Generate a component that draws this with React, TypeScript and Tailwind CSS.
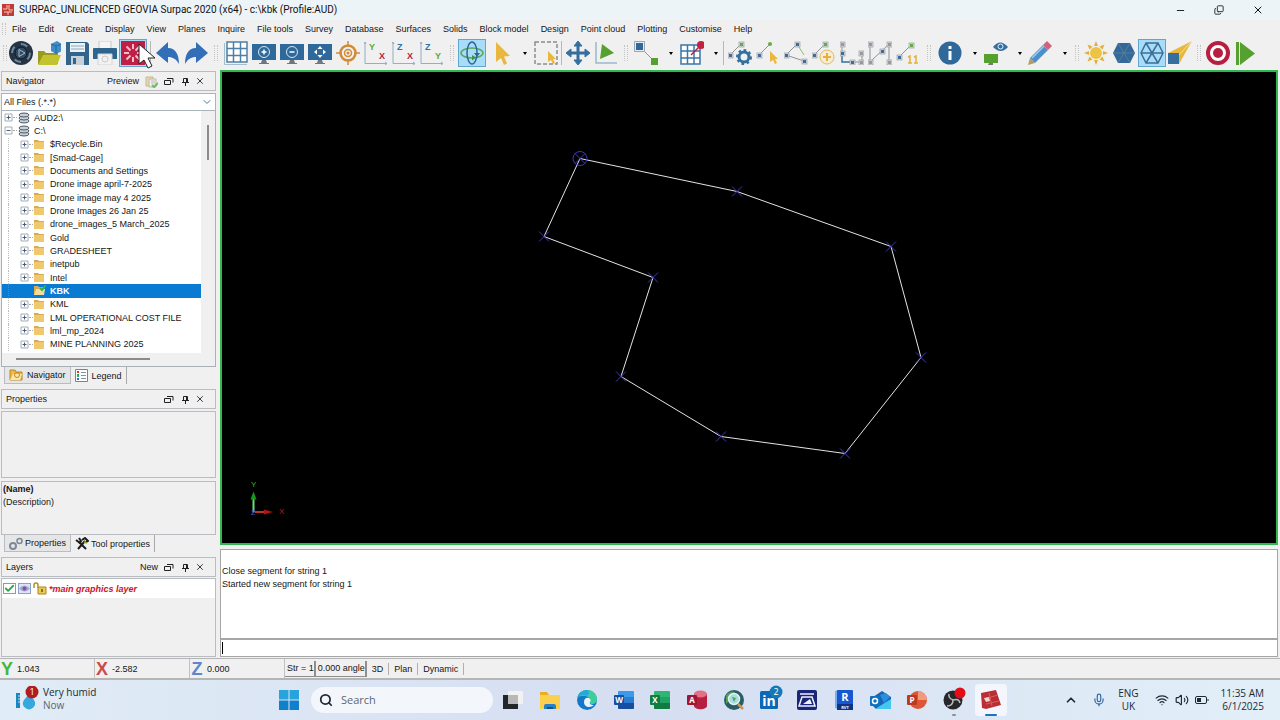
import React from 'react';
import { Check, ChevronDown, ChevronUp, Copy, Mic, Minus, Search, Volume2, Wifi, X } from 'lucide-react';

const menus = [
  'File', 'Edit', 'Create', 'Display', 'View', 'Planes', 'Inquire', 'File tools', 'Survey',
  'Database', 'Surfaces', 'Solids', 'Block model', 'Design', 'Point cloud', 'Plotting',
  'Customise', 'Help',
];

const folders = [
  '$Recycle.Bin', '[Smad-Cage]', 'Documents and Settings', 'Drone image april-7-2025',
  'Drone image may 4 2025', 'Drone Images 26 Jan 25', 'drone_images_5 March_2025', 'Gold',
  'GRADESHEET', 'inetpub', 'Intel', 'KBK', 'KML', 'LML OPERATIONAL COST FILE', 'lml_mp_2024',
  'MINE PLANNING 2025',
];

const points = [
  [580, 158], [737, 191], [891, 246], [921, 357], [845, 453],
  [721, 436], [621, 376], [653, 277], [544, 236],
];

/* ---------- toolbar parts ---------- */

interface ToolProps {
  label: string;
  active?: boolean;
  children: React.ReactNode;
}

const Tool: React.FC<ToolProps> = ({ label, active, children }) => (
  <button
    type="button"
    aria-label={label}
    className={`flex h-7 w-7 shrink-0 items-center justify-center ${
      active ? 'border border-[#5fa6d0] bg-[#a9dcf8]' : ''
    }`}
  >
    <svg viewBox="0 0 24 24" className="h-6 w-6 shrink-0" fill="none">
      {children}
    </svg>
  </button>
);

const Grip = ({ className = 'w-3' }: { className?: string }) => (
  <span className={`flex h-7 shrink-0 items-center justify-center ${className}`}>
    <span className="h-4 w-1 border-x border-dotted border-[#c4c4c4]" />
  </span>
);

const Drop = ({ className = 'w-[18px]' }: { className?: string }) => (
  <button type="button" aria-label="More options" className={`flex h-7 shrink-0 items-center justify-center pl-1 ${className}`}>
    <svg viewBox="0 0 4 3" className="h-[3px] w-1">
      <path d="M0 0h4L2 3z" fill="#000" />
    </svg>
  </button>
);

const Divider = () => <span className="mx-px mt-0.5 h-6 w-0.5 shrink-0 border-l border-[#b8b8b8]" />;

const Node = ({ x, y, color = '#3f6c98' }: { x: number; y: number; color?: string }) => (
  <g>
    <rect x={x - 2} y={y - 2} width="5" height="5" fill="#d5d9dc" stroke="#a3a8ac" strokeWidth=".8" />
    <rect x={x - 1} y={y - 1} width="3" height="3" fill={color} />
  </g>
);

const Monitor = ({ children }: { children?: React.ReactNode }) => (
  <>
    <path d="M0 3h24v16H0z" fill="#2f699c" />
    <path d="M10 19h4l1 3h2v1H7v-1h2z" fill="#6e7780" />
    {children}
  </>
);

const Axes = ({ a, b, ca, cb }: { a: string; b: string; ca: string; cb: string }) => (
  <>
    <path d="M1 1v21.500h22M21 21l2 1.500-2 1.500M0 3l1-2 1 2" stroke="#8eb0c9" />
    <text x="5" y="9" fontSize="9" fontWeight="700" fontFamily="Liberation Sans, sans-serif" fill={ca}>{a}</text>
    <text x="15" y="18" fontSize="9" fontWeight="700" fontFamily="Liberation Sans, sans-serif" fill={cb}>{b}</text>
  </>
);

const Toolbar = () => (
  <div className="flex h-8 shrink-0 items-start overflow-hidden pl-[3px] pt-px">
    <Grip className="w-1" />
    <Tool label="Surpac">
      <circle cx="12" cy="12" r="12" fill="#253444" />
      <circle cx="12" cy="12" r="9" stroke="#71889c" strokeWidth="2" strokeDasharray="7 7" />
      <circle cx="12" cy="12" r="6" fill="#314a61" stroke="#0f1b26" />
      <path d="M10 8.500v7l6-3.500z" stroke="#a7bccd" />
    </Tool>
    <Tool label="Open">
      <path d="M1 10h6l2 2h12v11H1z" fill="#9a9a1e" />
      <path d="M6 14h18l-4 10H1z" fill="#c2c42f" />
      <path d="M14 3l6-3 5 3v7l-6 3-5-3z" fill="#3f8cc8" />
      <path d="M14 3l5 2v8M19 5l6-2" stroke="#2368a0" />
    </Tool>
    <Tool label="Save">
      <path d="M1 1h21l3 3v20H1z" fill="#33648c" />
      <path d="M5 2h15v9H5z" fill="#edf2f5" />
      <path d="M6 5h13M6 8h13" stroke="#8fa9bb" />
      <path d="M6 15h13v9H6z" fill="#c5d0d8" />
      <path d="M8 17h3v6H8z" fill="#33648c" />
    </Tool>
    <Tool label="Print">
      <path d="M6 0h12v8H6z" fill="#f6f6f6" stroke="#c3c7ca" />
      <path d="M0 8q0-1 1-1h22q1 0 1 1v10H0z" fill="#2e658f" />
      <path d="M5 13h14v11H5z" fill="#f2f2f2" stroke="#d3d5d6" />
      <circle cx="12" cy="18" r="3" stroke="#c7c9cb" />
    </Tool>
    <Tool label="Reset graphics" active>
      <path d="M-1-1h26v26H-1z" fill="#c01f45" />
      <path d="M12 3v5M12 16v5M3 12h5M16 12h5M5.500 5.500l4 4M14.500 14.500l4 4M18.500 5.500l-4 4M9.500 14.500l-4 4" stroke="#f7bccb" strokeWidth="2" />
    </Tool>
    <span className="flex w-[7px] shrink-0 pl-0.5"><Divider /></span>
    <Tool label="Undo">
      <path d="M0 12L12 1v6c8 0 11 7 11 16-3-5-6-7-11-7v6z" fill="#336fb8" />
    </Tool>
    <Tool label="Redo">
      <path d="M24 12L12 1v6C4 7 1 14 1 23c3-5 6-7 11-7v6z" fill="#336fb8" />
    </Tool>
    <Grip />
    <Tool label="Grid">
      <path d="M3 1h20v20H3zM3 7.500h20M3 14.500h20M9.500 1v20M16.500 1v20" fill="#fff" stroke="#4d80a8" strokeWidth="1.500" />
      <path d="M.5 2v21.500H23" stroke="#a5bccd" />
    </Tool>
    <Tool label="Zoom in">
      <Monitor>
        <circle cx="12" cy="11" r="5.500" stroke="#d7e5f0" />
        <path d="M12 8.500v5M9.500 11h5" stroke="#fff" strokeWidth="1.500" />
      </Monitor>
    </Tool>
    <Tool label="Zoom out">
      <Monitor>
        <circle cx="12" cy="11" r="5.500" stroke="#d7e5f0" />
        <path d="M9.500 11h5" stroke="#fff" strokeWidth="1.500" />
      </Monitor>
    </Tool>
    <Tool label="Zoom all">
      <Monitor>
        <path d="M12 5l2.500 3h-5zM12 17l2.500-3h-5zM6 11l3-2.500v5zM18 11l-3-2.500v5z" fill="#fff" />
      </Monitor>
    </Tool>
    <Tool label="Centre">
      <circle cx="12" cy="12" r="7.500" stroke="#d48a34" strokeWidth="2.500" />
      <circle cx="12" cy="12" r="3.500" stroke="#d48a34" strokeWidth="1.500" />
      <path d="M12 0v6M12 18v6M0 12h6M18 12h6" stroke="#d48a34" strokeWidth="1.500" />
      <circle cx="12" cy="12" r="1.500" fill="#d48a34" />
    </Tool>
    <Tool label="XY view"><Axes a="Y" b="X" ca="#5aa83c" cb="#b3203f" /></Tool>
    <Tool label="XZ view"><Axes a="Z" b="X" ca="#346f9f" cb="#b3203f" /></Tool>
    <Tool label="YZ view"><Axes a="Z" b="Y" ca="#346f9f" cb="#5aa83c" /></Tool>
    <Grip />
    <Tool label="Orbit" active>
      <ellipse cx="12" cy="12" rx="11" ry="5" stroke="#57a857" strokeWidth="1.500" />
      <ellipse cx="12" cy="12" rx="5" ry="11" stroke="#2c6797" strokeWidth="1.500" />
      <path d="M12 14l4 2.500-4 3z" fill="#3f953f" />
      <path d="M14 12h6l-3 4z" fill="#2c6797" />
    </Tool>
    <Tool label="Select">
      <path d="M8 1v20l5-4 3 7 3-1.500-3-7 6-.5z" fill="#eab63c" />
    </Tool>
    <Drop />
    <Tool label="Box select">
      <path d="M1 1h22v22H1z" stroke="#8c8c8c" strokeWidth="1.500" strokeDasharray="4 2" />
      <path d="M14 10v11l3-2 2 4 2-1-2-4h3z" fill="#eab63c" />
    </Tool>
    <Divider />
    <Tool label="Pan">
      <path d="M12 0l4 5h-3v6h6V8l5 4-5 4v-3h-6v6h3l-4 5-4-5h3v-6H5v3l-5-4 5-4v3h6V5H8z" fill="#346f9f" stroke="#346f9f" />
    </Tool>
    <Tool label="Plane view">
      <path d="M2 1v21h21" stroke="#9cb6c8" strokeWidth="1.500" />
      <path d="M8 3l12 9-14 6z" fill="#55a02f" />
    </Tool>
    <Grip />
    <Tool label="Point to point">
      <path d="M6 6l14 14" stroke="#8d9397" />
      <path d="M.5.5h10v10H.5z" fill="#e8ecef" stroke="#9aa7b0" />
      <path d="M2 2h7v7H2z" fill="#2f699c" />
      <path d="M17 17h7v7h-7z" fill="#55a02f" />
    </Tool>
    <Drop />
    <Tool label="Digitise">
      <path d="M1 4h19v19H1zM1 10h19M1 17h19M7.500 4v19M14 4v19" fill="#fff" stroke="#3a76a6" strokeWidth="1.500" />
      <path d="M11 14l8-8" stroke="#b3203f" strokeWidth="1.500" />
      <circle cx="21" cy="4" r="4" fill="#c4203f" />
    </Tool>
    <Drop className="w-4" />
    <Divider />
    <Tool label="String settings">
      <path d="M2 14L13 3" stroke="#8d9397" />
      <Node x={2} y={14} /><Node x={13} y={3} color="#62ad45" />
      <circle cx="16" cy="16" r="5" stroke="#346f9f" strokeWidth="3" />
      <circle cx="16" cy="16" r="7" stroke="#346f9f" strokeWidth="2" strokeDasharray="2.700 2.700" />
    </Tool>
    <Tool label="Pick point">
      <path d="M3 14L14 3" stroke="#8d9397" />
      <Node x={3} y={14} />
      <circle cx="14" cy="3" r="2" fill="#62ad45" />
      <path d="M14 10v11l3-2 2 4 2-1-2-4h3z" fill="#eab63c" />
    </Tool>
    <Tool label="Close segment">
      <path d="M2 14L13 3M2 14l18 6" stroke="#8d9397" />
      <path d="M13 3l7 11" stroke="#8bc071" />
      <Node x={2} y={14} /><Node x={13} y={3} /><Node x={20} y={20} />
    </Tool>
    <Tool label="Insert point">
      <path d="M2 14L13 3" stroke="#8d9397" />
      <Node x={2} y={14} /><Node x={13} y={3} color="#62ad45" />
      <circle cx="15" cy="16" r="7" fill="#f5ecd5" stroke="#e3ba58" />
      <path d="M15 12v8M11 16h8" stroke="#e3b13c" strokeWidth="2" />
    </Tool>
    <Tool label="Break segment">
      <path d="M2 3v9M12 21h10v-9" stroke="#8d9397" />
      <path d="M2 12v9h9" stroke="#346f9f" strokeWidth="1.500" />
      <Node x={2} y={3} color="#999" /><Node x={2} y={12} /><Node x={12} y={21} /><Node x={21} y={21} color="#999" /><Node x={21} y={12} color="#999" />
    </Tool>
    <Tool label="Join segments">
      <path d="M2 3v18L21 3v18" stroke="#8d9397" />
      <Node x={2} y={3} color="#999" /><Node x={2} y={21} color="#999" /><Node x={14} y={10} /><Node x={21} y={3} color="#999" /><Node x={21} y={21} color="#999" />
    </Tool>
    <Tool label="Renumber">
      <path d="M3 16L15 4" stroke="#8d9397" />
      <Node x={3} y={16} /><Node x={15} y={4} color="#62ad45" />
      <path d="M12 16l2-1v7M18 16l2-1v7M12 22h4M18 22h4" stroke="#e3b13c" strokeWidth="1.500" />
    </Tool>
    <Grip className="w-3.5" />
    <Tool label="Information">
      <circle cx="12" cy="12" r="11.500" fill="#2f699c" />
      <path d="M12 5v3M12 10v9" stroke="#fff" strokeWidth="3" />
    </Tool>
    <Drop />
    <Tool label="Show display">
      <path d="M0 13h14v9H0z" fill="#55a02f" />
      <path d="M5 22h4v2H4z" fill="#777" />
      <path d="M9 6q7-9 15 0-7 8-15 0z" fill="#346f9f" />
      <circle cx="16.500" cy="5.500" r="2.500" stroke="#e7f0f7" />
    </Tool>
    <Drop className="w-4" />
    <Tool label="Edit style">
      <path d="M0 24l2-7 5 5z" fill="#bb9b5d" />
      <path d="M2 17L15 4l5 5L7 22z" fill="#4c8fc9" />
      <path d="M4 17L16 5" stroke="#a5cdec" strokeWidth="1.500" />
      <path d="M15 4l4-4 5 5-4 4z" fill="#d1627a" />
    </Tool>
    <Drop />
    <Grip className="w-2.5" />
    <Tool label="Light">
      <path d="M12 0l2 5h-4zM12 24l2-5h-4zM0 12l5-2v4zM24 12l-5-2v4zM3.500 3.500l5 2-3 3zM20.500 3.500l-2 5-3-3zM3.500 20.500l2-5 3 3zM20.500 20.500l-5-2 3-3z" fill="#e3ae39" />
      <circle cx="12" cy="12" r="6" fill="#edc346" />
    </Tool>
    <Tool label="Solid faces">
      <path d="M6 2h12l5 10-5 10H6L1 12z" fill="#33699a" />
      <path d="M6 2l12 20M18 2L6 22M1 12h22" stroke="#5a7e93" />
    </Tool>
    <Tool label="Wireframe" active>
      <path d="M6 2h12l5 10-5 10H6L1 12zM6 2l12 20M18 2L6 22M1 12h22" stroke="#3a6f97" strokeWidth="1.500" />
    </Tool>
    <Tool label="Projection">
      <path d="M24 0L0 12h11v11z" fill="#e8b83c" />
      <path d="M24 0L11 14" stroke="#f5e0a2" />
      <path d="M0 12h11v11H0z" fill="#346f9f" />
    </Tool>
    <Grip className="w-2.5" />
    <Tool label="Record">
      <circle cx="12" cy="12" r="10" fill="#fff" stroke="#b81e3f" strokeWidth="4" />
      <circle cx="12" cy="12" r="5" fill="#b81e3f" />
    </Tool>
    <Tool label="Run">
      <path d="M2 1h3v23H2zM6 1l15 11.500L6 24z" fill="#55a02f" />
    </Tool>
  </div>
);

/* ---------- left docked panels ---------- */

const PanelHeader = ({ title, action, copy }: { title: string; action?: string; copy?: boolean }) => (
  <div className="flex h-5 shrink-0 items-center border border-[#b9bcc0] bg-[#f0f0f0] pl-1 pr-2.5">
    <h2>{title}</h2>
    <div className="ml-auto flex items-center gap-1.5">
      {action && <button type="button">{action}</button>}
      {copy && (
        <button type="button" aria-label="Copy path">
          <svg viewBox="0 0 13 13" className="h-[13px] w-[13px]" fill="none">
            <path d="M1 2h7v9H1z" fill="#e4d7b4" stroke="#c9b98d" />
            <path d="M4 4h7v8H4z" fill="#f1efe8" stroke="#b9b9a8" />
            <path d="M6 6h4M6 8h4" stroke="#bbb" />
            <path d="M7 10l2 2 4-4" stroke="#6abf5e" strokeWidth="2" />
          </svg>
        </button>
      )}
      <button type="button" aria-label={`Float ${title}`} className="mr-0.5">
        <svg viewBox="0 0 10 9" className="h-[9px] w-2.5" fill="none" stroke="#222">
          <path d="M.5 3.500h6v4h-6zM3 1.500h6v4" />
        </svg>
      </button>
      <button type="button" aria-label={`Pin ${title}`}>
        <svg viewBox="0 0 7 9" className="h-[9px] w-[7px]" fill="none" stroke="#222">
          <path d="M1.500 5V1.500h4V5M0 5.500h7M3.500 6v3M4.500 2v3" />
        </svg>
      </button>
      <button type="button" aria-label={`Close ${title}`}>
        <X size={10} strokeWidth={2} />
      </button>
    </div>
  </div>
);

const Expander = ({ open }: { open?: boolean }) => (
  <svg viewBox="0 0 9 9" className="h-[9px] w-[9px] shrink-0" fill="none">
    <path d="M1 1h7v7H1z" fill="#fff" stroke="#a3adb9" />
    <path d={open ? 'M2.500 4.500h4' : 'M2.500 4.500h4M4.500 2.500v4'} stroke="#4a5e77" />
  </svg>
);

const DiskIcon = () => (
  <svg viewBox="0 0 12 12" className="h-3 w-3 shrink-0" fill="#c8d0d7" stroke="#4c5862">
    <ellipse cx="6" cy="9" rx="5" ry="2" />
    <ellipse cx="6" cy="6" rx="5" ry="2" />
    <ellipse cx="6" cy="3" rx="5" ry="2" />
  </svg>
);

const FolderIcon = ({ open }: { open?: boolean }) => (
  <svg viewBox="0 0 13 11" className="h-[11px] w-[13px] shrink-0" fill="none">
    <path d="M1 1h4l1 1h5v8H1z" fill="#d9ab4f" />
    {open ? <path d="M3 4h9l-1 6H1z" fill="#f3dc9c" /> : <path d="M1 3h10v7H1z" fill="#f0c96e" />}
    {open && <path d="M7 3l2 2 4-5" stroke="#35b044" strokeWidth="2" />}
  </svg>
);

const tabBase = 'flex h-[17px] items-center gap-0.5 px-1';
const activeTab = `${tabBase} border border-t-0 border-[#b9bcc0] bg-[#e6e6e6]`;
const plainTab = `${tabBase} border-r border-[#a9a9a9]`;

const Navigator = () => (
  <section className="flex flex-col">
    <PanelHeader title="Navigator" action="Preview" copy />
    <div className="relative mt-0.5 flex h-[18px] border border-[#a9b4bb] bg-white">
      <select aria-label="File filter" className="w-full appearance-none bg-transparent px-0.5 outline-none">
        <option>All Files (.*.*)</option>
      </select>
      <ChevronDown size={12} className="pointer-events-none absolute right-0.5 top-0.5 text-[#3f7ea0]" />
    </div>
    <div className="border border-t-0 border-[#a9b0b8] bg-[#f0f0f0]">
      <div className="flex">
        <ul className="flex h-[242px] flex-1 flex-col bg-white pb-0.5">
          <li className="flex flex-1 items-center pl-0.5">
            <button type="button" className="flex items-center">
              <Expander /><span className="w-1 border-t border-dotted border-[#aaa]" />
              <span className="ml-px mr-1 flex"><DiskIcon /></span>AUD2:\
            </button>
          </li>
          <li className="flex flex-1 items-center pl-0.5">
            <button type="button" className="flex items-center">
              <Expander open /><span className="w-1 border-t border-dotted border-[#aaa]" />
              <span className="ml-px mr-1 flex"><DiskIcon /></span>C:\
            </button>
          </li>
          {folders.map((name) => {
            const current = name === 'KBK';
            return (
              <li key={name} className={`flex flex-1 items-center pl-1.5 ${current ? 'bg-[#0a7bd3] font-bold text-white' : ''}`}>
                <span className={`h-full w-3 border-l border-dotted ${current ? 'border-[#3d8fd0]' : 'border-[#bbb]'}`} />
                <button type="button" className="flex items-center">
                  {current ? <span className="w-[9px]" /> : <Expander />}
                  <span className={`w-1 border-t border-dotted ${current ? 'border-transparent' : 'border-[#aaa]'}`} />
                  <FolderIcon open={current} />
                  <span className="ml-1 whitespace-nowrap">{name}</span>
                </button>
              </li>
            );
          })}
        </ul>
        <div className="w-[14px] bg-[#f0f0f0] pl-1.5 pt-3.5">
          <div className="h-[35px] w-0.5 bg-[#8b8b8b]" />
        </div>
      </div>
      <div className="h-[13px] pl-3.5 pt-[5px]">
        <div className="h-0.5 w-[134px] bg-[#8b8b8b]" />
      </div>
    </div>
    <div className="flex pl-[3px]">
      <button type="button" className={activeTab}>
        <svg viewBox="0 0 14 12" className="mr-0.5 h-3 w-3.5" fill="none">
          <path d="M1 1h5l1 2h6v8H1z" fill="#e9b949" stroke="#b98827" />
          <path d="M4 5h9l-2 6H1z" fill="#fae6a7" />
          <circle cx="8" cy="6" r="2.500" stroke="#c98526" />
        </svg>
        Navigator
      </button>
      <button type="button" className={plainTab}>
        <svg viewBox="0 0 13 13" className="mr-0.5 h-[13px] w-[13px]" fill="none">
          <path d="M.5.5h12v12H.5z" fill="#fff" stroke="#71849c" />
          <path d="M2 2h2v2H2z" fill="#d33" /><path d="M2 5h2v3H2z" fill="#3a5" /><path d="M2 9h2v2H2z" fill="#36c" />
          <path d="M6 3.500h5M6 6.500h5M6 9.500h5" stroke="#8391a3" />
        </svg>
        Legend
      </button>
    </div>
  </section>
);

const Properties = () => (
  <section className="flex flex-col">
    <PanelHeader title="Properties" />
    <div className="mt-0.5 h-[67px] border border-[#b9bcc0]" />
    <div className="mt-[3px] h-[54px] border border-[#b9bcc0] pl-px pt-px leading-[13px]">
      <p className="font-bold">(Name)</p>
      <p>(Description)</p>
    </div>
    <div className="flex pl-[3px]">
      <button type="button" className={activeTab}>
        <svg viewBox="0 0 14 13" className="h-[13px] w-3.5" fill="none" stroke="#7b8a99">
          <circle cx="4" cy="9" r="3" strokeWidth="2" />
          <circle cx="10.500" cy="4" r="2.500" strokeWidth="1.500" />
        </svg>
        Properties
      </button>
      <button type="button" className={plainTab}>
        <svg viewBox="0 0 14 13" className="h-[13px] w-3.5" fill="none">
          <path d="M3 12l7-8M11 12L4 5" stroke="#1d1d1d" strokeWidth="2" />
          <path d="M1 3l4 3 1-2-2-3M7 3l3-2 3 3-2 1" stroke="#1d1d1d" strokeWidth="2" />
          <path d="M9 5l3 1" stroke="#8da12d" strokeWidth="1.500" />
        </svg>
        Tool properties
      </button>
    </div>
  </section>
);

const Layers = () => (
  <section className="flex flex-1 flex-col">
    <PanelHeader title="Layers" action="New" />
    <div className="mt-px flex-1 border border-[#b9bcc0]">
      <div className="flex h-[19px] items-center gap-0.5 bg-white pl-px">
        <span className="relative flex">
          <input id="main-layer" type="checkbox" defaultChecked className="h-[11px] w-[13px] appearance-none border border-[#7ba0b8] bg-white" />
          <Check size={11} strokeWidth={4} className="pointer-events-none absolute left-px top-0 text-[#2ca64a]" />
        </span>
        <button type="button" aria-label="Toggle visibility" className="flex h-[11px] w-[13px] items-center border border-[#8aa0cf] bg-[#dfe5f3]">
          <svg viewBox="0 0 11 7" className="h-[7px] w-[11px]">
            <path d="M0 3.500q5.500-6 11 0-5.500 6-11 0z" fill="#a7a5d6" />
            <circle cx="5.500" cy="3.500" r="2" fill="#775a9a" />
          </svg>
        </button>
        <button type="button" aria-label="Lock layer">
          <svg viewBox="0 0 14 13" className="h-[13px] w-3.5" fill="none">
            <path d="M1 6V3q0-2 2-2t2 2v3" stroke="#b38f2b" strokeWidth="1.500" />
            <path d="M5 5h8v7H5z" fill="#eccb52" stroke="#a98526" />
            <path d="M9 7v3" stroke="#6c5516" strokeWidth="1.500" />
          </svg>
        </button>
        <label htmlFor="main-layer" className="font-bold italic text-[#cf1029]">*main graphics layer</label>
      </div>
    </div>
  </section>
);

/* ---------- graphics view ---------- */

const Viewport = () => (
  <div className="min-h-0 flex-1 border-2 border-[#2fb84f] bg-black">
    <svg viewBox="222 72 1054 470" className="h-full w-full" fill="none">
      <polygon points={points.map((p) => p.join(',')).join(' ')} stroke="#e4e4e4" />
      {points.map(([x, y]) => (
        <path key={`${x}-${y}`} d={`M${x - 5} ${y - 5}l10 10m0-10l-10 10`} stroke="#3c38b8" />
      ))}
      <circle cx="580" cy="158" r="7" stroke="#3c38b8" />
      <path d="M253.500 512v-15" stroke="#6be06b" strokeWidth="2" />
      <path d="M250.500 499l3-8 3 8z" fill="#15981b" />
      <path d="M255 511.500h10" stroke="#b83232" strokeWidth="2" />
      <path d="M264 509l9 2.500-9 2.500z" fill="#b31313" />
      <text x="251" y="486" fontSize="8" fontFamily="Liberation Sans, sans-serif" fill="#22c522">Y</text>
      <text x="279" y="513" fontSize="8" fontFamily="Liberation Sans, sans-serif" fill="#c41515">X</text>
      <text x="251" y="514" fontSize="7" fontFamily="Liberation Sans, sans-serif" fill="#4d4df0">Z</text>
    </svg>
  </div>
);

const Console = () => (
  <div className="mt-1 flex h-[108px] shrink-0 flex-col border border-[#a6a6a6] bg-white">
    <div className="flex-1 pl-px pt-[15px] leading-[13px]">
      <p>Close segment for string 1</p>
      <p>Started new segment for string 1</p>
    </div>
    <div className="flex h-[18px] items-center border-t-2 border-[#a6a6a6] pl-px">
      <span className="h-3 w-px bg-black" />
      <input aria-label="Command" className="h-full flex-1 px-1 outline-none" />
    </div>
  </div>
);

const Coordinate = ({ axis, value, className }: { axis: string; value: string; className: string }) => (
  <div className="flex w-[95px] items-center gap-1 border-r border-[#c2c2c2] pl-px">
    <span className={`w-3 text-center text-lg font-bold leading-none ${className}`}>{axis}</span>
    <span>{value}</span>
  </div>
);

const StatusBar = () => (
  <footer className="mt-px flex h-[22px] shrink-0 items-stretch border-y border-[#b5b5b5] border-b-2 bg-[#f0f0f0]">
    <Coordinate axis="Y" value="1.043" className="text-[#45b83c]" />
    <Coordinate axis="X" value="-2.582" className="text-[#cd4b45]" />
    <Coordinate axis="Z" value="0.000" className="text-[#5c86ce]" />
    <div className="flex items-center">
      <button type="button" className="h-4 whitespace-nowrap border-b border-r-2 border-[#8f8f8f] pl-0.5">Str = 1</button>
      <button type="button" className="h-4 whitespace-nowrap border-b border-r-2 border-[#8f8f8f] pl-0.5">0.000 angle</button>
      <span className="border-r border-[#b0b0b0] px-[5px]">3D</span>
      <span className="border-r border-[#b0b0b0] px-[5px]">Plan</span>
      <span className="border-r border-[#b0b0b0] px-[5px]">Dynamic</span>
    </div>
  </footer>
);

/* ---------- Windows taskbar ---------- */

interface OfficeProps {
  letter: string;
  top: string;
  mid: string;
  dark: string;
  round?: boolean;
}

const Office: React.FC<OfficeProps> = ({ letter, top, mid, dark, round }) => (
  <>
    {round ? (
      <>
        <circle cx="12" cy="10" r="9" fill={mid} />
        <path d="M12 1a9 9 0 0 1 9 9h-9z" fill={top} />
      </>
    ) : (
      <>
        <rect x="5" y="1" width="16" height="18" rx="1.500" fill={mid} />
        <path d="M5 7V2.500Q5 1 6.500 1h13Q21 1 21 2.500V7z" fill={top} />
        <path d="M5 13h16v4.500q0 1.500-1.500 1.500h-13Q5 19 5 17.500z" fill={dark} />
      </>
    )}
    <rect x="1" y="5" width="10" height="10" rx="1" fill={dark} />
    <text x="6" y="13" fontSize="8" fontWeight="700" textAnchor="middle" fontFamily="Open Sans, sans-serif" fill="#fff">{letter}</text>
  </>
);

const apps: { name: string; icon: React.ReactNode; active?: boolean; running?: boolean }[] = [
  {
    name: 'Task view',
    icon: <><path d="M1 5h15v14H1z" fill="#232628" /><path d="M6 1h15v13H6z" fill="#f2f2f2" /><path d="M6 5h10v9H6z" fill="#b8b8b8" /></>,
  },
  {
    name: 'File Explorer',
    icon: <><path d="M1 2h7l2 3h11v14H1z" fill="#e9ae22" /><path d="M1 5h20v14H1z" fill="#fbd04d" /><path d="M5 19v-3q0-2 2-2h8q2 0 2 2v3z" fill="#2580ca" /><path d="M8 17h6v2H8z" fill="#174f86" /></>,
  },
  {
    name: 'Edge',
    icon: <>
      <circle cx="11" cy="10" r="10" fill="#1677c8" />
      <path d="M1.500 7C3 2 7 0 11 0c6 0 10 4 10 9 0 3-2 5-5 5-2 0-3-1-2-2 1-4-2-6-6-6-3 0-5 0-6.500 1z" fill="#3ccf9c" />
      <path d="M1.500 7C3 2 7 0 11 0c2 0 3 4 0 6-5-2-8 0-9.500 1z" fill="#27a8dd" />
      <path d="M8 12c0-3 2-5 5-4 2 1 2 3 1 4-1 2 1 3 4 3-3 3-10 3-10-3z" fill="#e7f2fa" />
    </>,
  },
  { name: 'Word', icon: <Office letter="W" top="#3c9be8" mid="#2b7cd3" dark="#174ea0" /> },
  { name: 'Excel', icon: <Office letter="X" top="#2fb670" mid="#21a366" dark="#107c41" /> },
  {
    name: 'Access',
    icon: <>
      <path d="M8 3.500v12c0 5 13 5 13 0v-12z" fill="#b51f40" />
      <ellipse cx="14.500" cy="4" rx="6.500" ry="3.500" fill="#e56f84" />
      <rect x="1" y="5" width="10" height="10" rx="1" fill="#a01632" />
      <text x="6" y="13" fontSize="8" fontWeight="700" textAnchor="middle" fontFamily="Open Sans, sans-serif" fill="#fff">A</text>
    </>,
  },
  {
    name: 'Map viewer',
    icon: <>
      <circle cx="11" cy="10" r="10" fill="#275d66" /><path d="M3 5q5-5 9-3l-4 7-5 5z" fill="#4e9e58" />
      <circle cx="11" cy="9" r="5.500" fill="#a9dcdc" stroke="#e4f1ee" strokeWidth="1.500" /><path d="M9 7l4 1-2 4z" fill="#50a368" />
      <path d="M15 14l5 5" stroke="#d1944f" strokeWidth="2.500" />
    </>,
  },
  {
    name: 'LinkedIn',
    icon: <>
      <rect x="1" y="1" width="18" height="18" rx="1.500" fill="#0b68b4" />
      <text x="10" y="16" fontSize="14" fontWeight="700" textAnchor="middle" fontFamily="Open Sans, sans-serif" fill="#fff">in</text>
      <circle cx="17" cy="2" r="6.500" fill="#1479b8" />
      <text x="17" y="5" fontSize="9" textAnchor="middle" fontFamily="Open Sans, sans-serif" fill="#fff">2</text>
    </>,
  },
  {
    name: 'Scan',
    icon: <><rect x="1" y="0" width="20" height="20" rx="2" fill="#1a2778" /><path d="M4 4h14M6 7h10l3 9H3z" stroke="#eef1ff" strokeWidth="1.500" fill="none" /><path d="M7 14l7-5 2 5z" fill="#eef1ff" /></>,
  },
  {
    name: 'Revit',
    icon: <>
      <path d="M2 1l3-1v19l-3-1z" fill="#79aef0" /><rect x="4" y="0" width="16" height="20" rx="1" fill="#1758d1" /><path d="M4 14h16v6H4z" fill="#0b3587" />
      <text x="12" y="11" fontSize="11" fontWeight="700" textAnchor="middle" fontFamily="Open Sans, sans-serif" fill="#fff">R</text>
      <text x="12" y="19" fontSize="4" fontWeight="700" textAnchor="middle" fontFamily="Open Sans, sans-serif" fill="#fff">RVT</text>
    </>,
  },
  {
    name: 'Outlook',
    icon: <>
      <path d="M3 7l9-6 9 6v12H6l-3-3z" fill="#1766b5" /><path d="M10 5l6-2 4 4-6 6z" fill="#2a8ede" /><path d="M5 19l16-10v10z" fill="#45c6ee" />
      <rect x="0" y="6" width="10" height="10" rx="1" fill="#0e72c4" /><circle cx="5" cy="11" r="2.500" fill="none" stroke="#fff" strokeWidth="1.500" />
    </>,
  },
  { name: 'PowerPoint', icon: <Office letter="P" top="#f29a80" mid="#dd5537" dark="#bd3a1d" round /> },
  {
    name: 'OBS',
    running: true,
    icon: <>
      <circle cx="10" cy="10" r="9.500" fill="#25272a" /><path d="M10 10q-5-2-4-6M10 10q6-2 7 3M10 10q0 6-6 6" stroke="#bbb" strokeWidth="1.500" fill="none" />
      <circle cx="17" cy="3" r="5.500" fill="#e20d17" />
    </>,
  },
  {
    name: 'Surpac',
    active: true,
    icon: <><path d="M1 3l15-3 5 15-15 4-4-1z" fill="#bb2d34" /><path d="M4 9l14-4M6 14l13-3M9 3l3 13" stroke="#d0605a" /><path d="M4 8l5-1 1 4-4 1z" fill="#f2d3cd" /></>,
  },
];

const Taskbar = () => (
  <div className="grid h-10 shrink-0 grid-cols-[1fr_auto_1fr] items-center bg-linear-to-r from-[#e0ecf6] via-[#d6def2] to-[#e2eff8] font-['Open_Sans',sans-serif] text-[10px] text-[#202a35]">
    <button type="button" className="flex items-center gap-1 pb-0.5 pl-[15px] text-left leading-[13px]">
      <svg viewBox="0 0 24 26" className="h-[26px] w-6 shrink-0" fill="none">
        <path d="M1 7h4v15H1z" fill="#1b85bf" /><path d="M3 10h2M3 13h2M3 16h2" stroke="#bfe3f5" />
        <path d="M14 8l5 6a6 6 0 1 1-10 0z" fill="#36a8de" />
        <circle cx="17" cy="6" r="6.500" fill="#b01c22" />
        <text x="17" y="9" fontSize="9" textAnchor="middle" fontFamily="Open Sans, sans-serif" fill="#fff">1</text>
      </svg>
      <span>
        <span className="block">Very humid</span>
        <span className="block text-[#5a6675]">Now</span>
      </span>
    </button>

    <div className="flex items-center">
      <button type="button" aria-label="Start" className="mx-2">
        <svg viewBox="0 0 20 20" className="h-5 w-5">
          <path d="M0 0h9.500v9.500H0zM10.500 0H20v9.500h-9.500z" fill="#29a3dc" />
          <path d="M0 10.500h9.500V20H0zM10.500 10.500H20V20h-9.500z" fill="#1180cb" />
        </svg>
      </button>
      <label className="ml-1 mr-0.5 flex h-[26px] w-[182px] items-center gap-2 rounded-full bg-[#f3f7fc] px-2">
        <Search size={14} strokeWidth={3} />
        <input type="search" placeholder="Search" className="min-w-0 flex-1 bg-transparent text-[11px] outline-none placeholder:text-[#5c6672]" />
      </label>
      <div className="flex w-[514px]">
        {apps.map((app) => (
          <button key={app.name} type="button" aria-label={app.name} className="relative flex h-9 flex-1 items-center justify-center">
            <span className={`flex h-8 w-8 items-center justify-center rounded ${app.active ? 'bg-[#f3f7fd]' : ''}`}>
              <svg viewBox="0 0 22 20" className="h-5 w-[22px] overflow-visible">{app.icon}</svg>
            </span>
            {app.active && <span className="absolute bottom-0.5 h-0.5 w-3 rounded-full bg-[#1c73b8]" />}
            {app.running && <span className="absolute bottom-0.5 h-0.5 w-1 rounded-full bg-[#8a919c]" />}
          </button>
        ))}
      </div>
    </div>

    <div className="flex items-center justify-end gap-2 pr-4">
      <button type="button" aria-label="Hidden icons" className="mr-1.5"><ChevronUp size={14} strokeWidth={3} /></button>
      <Mic size={14} strokeWidth={2} className="mr-1 text-[#2e68a0]" />
      <button type="button" className="mr-2 text-center leading-[13px]">ENG<br />UK</button>
      <button type="button" aria-label="Network, volume and battery" className="mr-1 flex items-center gap-1.5">
        <Wifi size={14} strokeWidth={2} />
        <Volume2 size={14} strokeWidth={2} />
        <svg viewBox="0 0 14 10" className="h-2.5 w-3.5" fill="none" stroke="#202a35">
          <rect x=".5" y="1.500" width="11" height="7" rx="1.500" />
          <path d="M2 3h4v4H2z" fill="#202a35" stroke="none" />
          <path d="M13 4v2" />
        </svg>
      </button>
      <button type="button" className="text-right leading-[13px]">11:35 AM<br />6/1/2025</button>
    </div>
  </div>
);

const TitleBar = () => (
  <header className="flex h-5 shrink-0 items-center bg-[#edf4f8] pl-0.5 font-[Roboto,sans-serif] text-[10px] text-[#111]">
    <svg viewBox="0 0 12 12" className="mr-[5px] h-3 w-3" fill="none">
      <path d="M0 0h12v12H0z" fill="#c33a35" />
      <path d="M1 5h4V1M7 1v5h4M2 8h8M6 8v3" stroke="#f3c8bf" />
    </svg>
    <h1 className="whitespace-nowrap">SURPAC_UNLICENCED GEOVIA Surpac 2020 (x64) - c:\kbk (Profile:AUD)</h1>
    <div className="ml-auto flex gap-7 pr-4">
      <button type="button" aria-label="Minimise"><Minus size={11} strokeWidth={2} /></button>
      <button type="button" aria-label="Restore"><Copy size={10} strokeWidth={2} className="-scale-x-100 rotate-180" /></button>
      <button type="button" aria-label="Close"><X size={12} strokeWidth={2} /></button>
    </div>
  </header>
);

const App: React.FC = () => (
  <div className="relative flex h-screen flex-col overflow-hidden bg-[#f0f0f0] font-['Liberation_Sans',Arial,sans-serif] text-[9px] leading-3 text-[#161616]">
    <TitleBar />
    <nav className="flex h-[18px] shrink-0 items-center gap-3 pl-0.5">
      <span className="-mr-1.5 h-3 w-1 border-x border-dotted border-[#c4c4c4]" />
      {menus.map((menu) => (
        <button key={menu} type="button" className="whitespace-nowrap">{menu}</button>
      ))}
    </nav>
    <Toolbar />
    <main className="flex min-h-0 flex-1 gap-1 pr-0.5">
      <aside className="flex w-[216px] shrink-0 flex-col gap-[5px] pl-px pt-px">
        <Navigator />
        <Properties />
        <Layers />
      </aside>
      <div className="flex min-w-0 flex-1 flex-col">
        <Viewport />
        <Console />
      </div>
    </main>
    <StatusBar />
    <Taskbar />
    {/* mouse pointer */}
    <svg viewBox="0 0 18 26" className="pointer-events-none absolute left-[138px] top-[43px] h-[26px] w-[18px]">
      <path d="M1 1v20l5-4 4 8 4-2-4-8h7z" fill="#fff" stroke="#222" />
    </svg>
  </div>
);

export default App;
